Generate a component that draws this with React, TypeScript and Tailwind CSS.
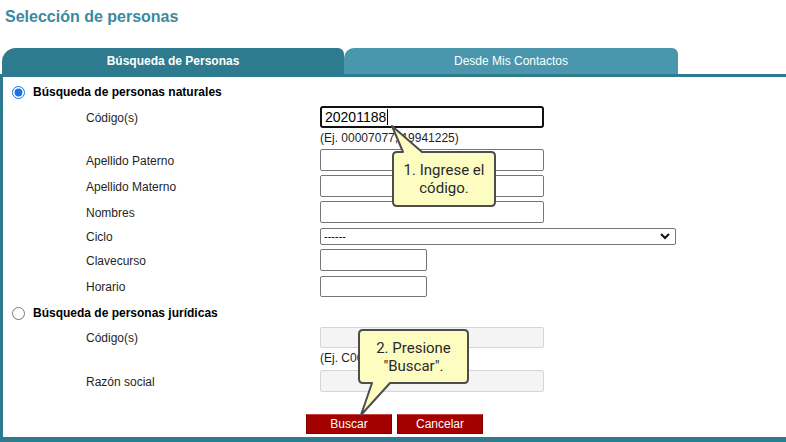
import React from "react";

const font = { fontFamily: '"Liberation Sans", Arial, sans-serif' };

const Label = ({ children }: { children: React.ReactNode }) => (
  <div className="ml-[83px] w-[234px] shrink-0 pt-[1px] text-[12px] text-[#1f1f1f]">{children}</div>
);

const TextBox = ({ w = "w-[224px]", h = "h-[22px]", disabled = false }: { w?: string; h?: string; disabled?: boolean }) => (
  <div
    className={`${w} ${h} rounded-[2px] border ${
      disabled ? "border-[#d6d6d6] bg-[#f4f4f4]" : "border-[#767676] bg-white"
    }`}
  />
);

const Row = ({ label, className, children }: { label: string; className: string; children: React.ReactNode }) => (
  <div className={`flex items-center ${className}`}>
    <Label>{label}</Label>
    {children}
  </div>
);

const Callout1 = () => (
  <div className="absolute left-[386px] top-[120px] h-[90px] w-[112px]">
    <svg width="112" height="90" className="absolute inset-0">
      <path
        d="M11 32 L17 32 L6 6 L36 32 L105 32 Q109 32 109 36 L109 82 Q109 86 105 86 L11 86 Q7 86 7 82 L7 36 Q7 32 11 32 Z"
        fill="#fdfdc2"
        stroke="#4d4d4d"
        strokeWidth="2"
        strokeLinejoin="round"
      />
    </svg>
    <div
      className="absolute left-[7px] top-[32px] flex h-[54px] w-[102px] flex-col items-center justify-center text-[15px] leading-[18px] text-[#2a2a2a]"
      style={{ fontFamily: "Roboto, sans-serif" }}
    >
      <span>1. Ingrese el</span>
      <span>código.</span>
    </div>
  </div>
);

const Callout2 = () => (
  <div className="absolute left-[352px] top-[324px] h-[96px] w-[122px]">
    <svg width="122" height="96" className="absolute inset-0">
      <path
        d="M11 6 L112 6 Q116 6 116 10 L116 55 Q116 59 112 59 L38 59 L9 91 L20 59 L11 59 Q7 59 7 55 L7 10 Q7 6 11 6 Z"
        fill="#fdfdc2"
        stroke="#4d4d4d"
        strokeWidth="2"
        strokeLinejoin="round"
      />
    </svg>
    <div
      className="absolute left-[7px] top-[6px] flex h-[53px] w-[109px] flex-col items-center justify-center text-[15px] leading-[18px] text-[#2a2a2a]"
      style={{ fontFamily: "Roboto, sans-serif" }}
    >
      <span>2. Presione</span>
      <span>"Buscar".</span>
    </div>
  </div>
);

export default function App() {
  return (
    <div className="relative h-[442px] w-[786px] overflow-hidden bg-white" style={font}>
      <h1 className="pl-[5px] pt-[7px] text-[16px] font-bold leading-[20px] text-[#3a8aa1]">Selección de personas</h1>

      {/* tabs */}
      <div className="mt-[21px] flex border-b-[3px] border-[#2e7b8f] pl-[2px]">
        <div className="flex h-[26px] w-[342px] items-center justify-center rounded-tl-[14px] rounded-tr-[6px] bg-[#2e7b8f] text-[12px] font-bold text-white">
          Búsqueda de Personas
        </div>
        <div className="flex h-[26px] w-[334px] items-center justify-center rounded-tl-[10px] rounded-tr-[6px] bg-[#4a96ac] text-[12px] text-white">
          Desde Mis Contactos
        </div>
      </div>

      {/* panel */}
      <div className="flex h-[365px] flex-col border-b-[5px] border-l-[3px] border-[#2e7b8f]">
        <div className="mt-[6px] flex h-[18px] items-center pl-[9px]">
          <input type="radio" name="tipo" defaultChecked className="m-0 h-[13px] w-[13px] accent-[#1a73e8]" />
          <span className="ml-[8px] text-[12px] font-bold text-black">Búsqueda de personas naturales</span>
        </div>

        <Row label="Código(s)" className="mt-[5px]">
          <div className="flex h-[22px] w-[224px] items-center rounded-[3px] border-2 border-[#111] pl-[3px] text-[14px] text-black">
            20201188<span className="ml-[1px] h-[16px] w-[1px] bg-black" />
          </div>
        </Row>
        <div className="mt-[3px] pl-[317px] text-[12px] leading-[14px] text-[#1f1f1f]">(Ej. 00007077, 19941225)</div>

        <Row label="Apellido Paterno" className="mt-[4px]">
          <TextBox />
        </Row>
        <Row label="Apellido Materno" className="mt-[4px]">
          <TextBox />
        </Row>
        <Row label="Nombres" className="mt-[4px]">
          <TextBox />
        </Row>
        <Row label="Ciclo" className="mt-[5px] h-[17px]">
          <div className="relative h-[17px] w-[356px]">
            <select className="block h-[17px] w-full appearance-none rounded-[2px] border border-[#767676] bg-white py-0 pl-[3px] text-[11px] leading-[15px] text-black">
              <option>------</option>
            </select>
            <svg width="10" height="7" viewBox="0 0 10 7" className="pointer-events-none absolute right-[6px] top-[5px]">
              <path d="M1 1 L5 5 L9 1" fill="none" stroke="#111" strokeWidth="2" />
            </svg>
          </div>
        </Row>
        <Row label="Clavecurso" className="mt-[4px]">
          <TextBox w="w-[107px]" />
        </Row>
        <Row label="Horario" className="mt-[5px]">
          <TextBox w="w-[107px]" h="h-[21px]" />
        </Row>

        <div className="mt-[7px] flex h-[18px] items-center pl-[9px]">
          <input type="radio" name="tipo" className="m-0 h-[13px] w-[13px]" />
          <span className="ml-[8px] text-[12px] font-bold text-black">Búsqueda de personas jurídicas</span>
        </div>

        <Row label="Código(s)" className="mt-[5px]">
          <TextBox h="h-[21px]" disabled />
        </Row>
        <div className="mt-[3px] pl-[317px] text-[12px] leading-[14px] text-[#1f1f1f]">(Ej. C0001234)</div>
        <Row label="Razón social" className="mt-[5px]">
          <TextBox disabled />
        </Row>

        <div className="mt-[22px] flex justify-center gap-[5px]">
          <button className="h-[20px] w-[86px] border border-[#7d0000] border-t-[#c44] bg-[#a30000] text-[12px] text-white">
            Buscar
          </button>
          <button className="h-[20px] w-[86px] border border-[#7d0000] border-t-[#c44] bg-[#a30000] text-[12px] text-white">
            Cancelar
          </button>
        </div>
      </div>

      <Callout1 />
      <Callout2 />
    </div>
  );
}
